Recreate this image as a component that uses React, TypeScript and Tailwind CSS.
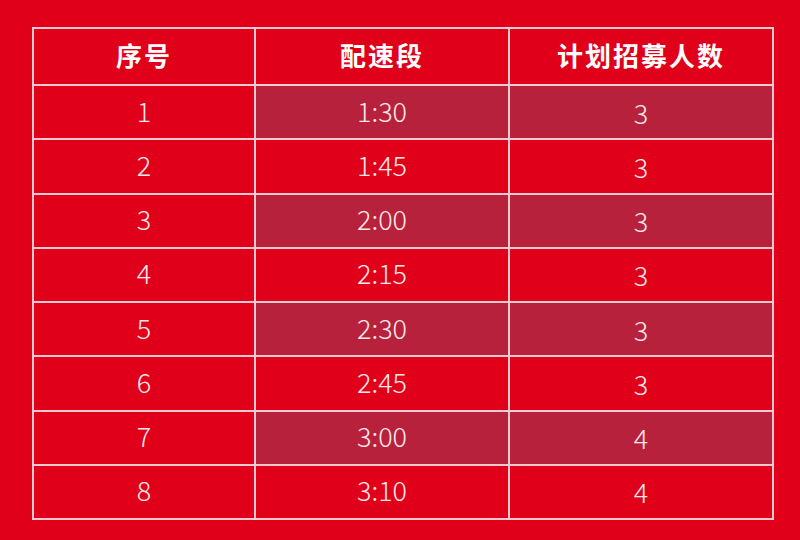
const rows = [
  ["1", "1:30", "3"],
  ["2", "1:45", "3"],
  ["3", "2:00", "3"],
  ["4", "2:15", "3"],
  ["5", "2:30", "3"],
  ["6", "2:45", "3"],
  ["7", "3:00", "4"],
  ["8", "3:10", "4"],
];

export default function App() {
  return (
    <div
      className="w-[800px] h-[540px] bg-[#e0001a] pt-[27px] pl-[32px]"
      style={{ fontFamily: '"Noto Sans CJK SC", "Noto Sans", sans-serif' }}
    >
      <div className="grid w-[742px] grid-cols-[220px_252px_262px] auto-rows-[52.25px] grid-rows-[55px] gap-[2px] p-[2px] bg-[#f7c9d0]">
        {/* header */}
        {["序号", "配速段", "计划招募人数"].map((h) => (
          <div
            key={h}
            className="flex items-center justify-center bg-[#e0001a] text-white text-[26px] font-bold tracking-[2px] pb-[4px]"
          >
            {h}
          </div>
        ))}

        {rows.map((r, i) =>
          r.map((cell, j) => {
            const shaded = i % 2 === 0 && j > 0;
            return (
              <div
                key={`${i}-${j}`}
                className={`flex items-center justify-center text-[27px] font-light leading-none text-[#fde8ec] ${
                  shaded ? "bg-[#b8213b]" : "bg-[#e0001a]"
                } ${j === 2 ? "pt-[0px]" : "pb-[4px]"}`}
              >
                {cell}
              </div>
            );
          }),
        )}
      </div>
    </div>
  );
}
